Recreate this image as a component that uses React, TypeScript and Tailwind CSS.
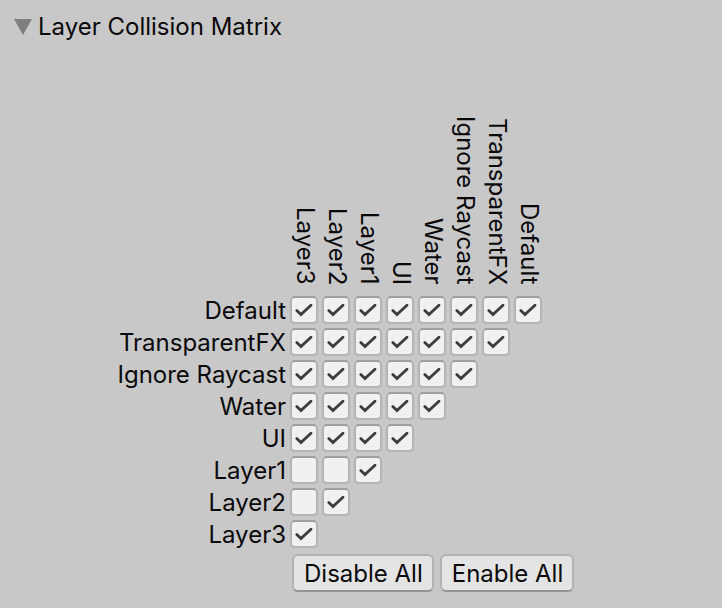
import { useState } from "react";

const LAYERS = ["Default", "TransparentFX", "Ignore Raycast", "Water", "UI", "Layer1", "Layer2", "Layer3"];
const COLUMNS = [...LAYERS].reverse();
const INITIALLY_OFF = ["Layer1/Layer3", "Layer1/Layer2", "Layer2/Layer3"];

const ALL_PAIRS = LAYERS.flatMap((row, i) =>
  COLUMNS.slice(0, COLUMNS.length - i).map((column) => `${row}/${column}`),
);

type CollisionToggleProps = { label: string; checked: boolean; onChange: () => void };

function CollisionToggle({ label, checked, onChange }: CollisionToggleProps) {
  return (
    <label className="grid size-8 place-items-center">
      <input
        type="checkbox"
        aria-label={label}
        checked={checked}
        onChange={onChange}
        className="peer col-start-1 row-start-1 size-7 appearance-none rounded-[5px] border-2 border-[#b4b4b4] border-t-[#9f9f9f] bg-[#f0f0f0]"
      />
      <svg
        viewBox="0 0 28 28"
        aria-hidden="true"
        className="pointer-events-none invisible col-start-1 row-start-1 size-7 peer-checked:visible"
      >
        <path
          d="M6.8 14.6 L10.9 18.6 L21 9.2"
          fill="none"
          stroke="#3c3c3c"
          strokeWidth="2.8"
          strokeLinecap="round"
          strokeLinejoin="miter"
        />
      </svg>
    </label>
  );
}

function ActionButton({ children, onClick }: { children: string; onClick: () => void }) {
  return (
    <button
      type="button"
      onClick={onClick}
      className="h-[38px] rounded-md border-2 border-[#b2b2b2] border-b-[#949494] bg-[#e4e4e4] pt-0.5 pr-[9px] pl-2.5 leading-8 text-[#090909]"
    >
      {children}
    </button>
  );
}

export default function App() {
  const [open, setOpen] = useState(true);
  const [enabled, setEnabled] = useState(() => new Set(ALL_PAIRS.filter((pair) => !INITIALLY_OFF.includes(pair))));

  const toggle = (pair: string) =>
    setEnabled((previous) => {
      const next = new Set(previous);
      if (!next.delete(pair)) next.add(pair);
      return next;
    });

  return (
    <main className="min-h-screen bg-[#c8c8c8] pt-[11px] pb-4 font-['Inter',sans-serif] text-2xl leading-8 text-[#090909]">
      <h1>
        <button
          type="button"
          aria-expanded={open}
          onClick={() => setOpen(!open)}
          className="flex items-center gap-1 pl-3.5"
        >
          <svg viewBox="0 0 20 16" aria-hidden="true" className={`h-4 w-5 ${open ? "" : "-rotate-90"}`}>
            <path d="M0 0 H18 L9 16 Z" fill="#7f7f7f" />
          </svg>
          Layer Collision Matrix
        </button>
      </h1>
      {open && (
        <section aria-label="Layer Collision Matrix">
          <table className="mt-[71px] border-collapse">
            <thead>
              <tr>
                <td className="w-72 p-0" />
                {COLUMNS.map((column) => (
                  <th key={column} scope="col" className="h-45 w-8 p-0 pb-[9px] align-bottom font-normal">
                    <span className="ml-auto block w-[30px] text-right leading-[30px] whitespace-nowrap [writing-mode:vertical-rl]">
                      {column}
                    </span>
                  </th>
                ))}
              </tr>
            </thead>
            <tbody>
              {LAYERS.map((row, i) => (
                <tr key={row}>
                  <th scope="row" className="w-72 p-0 pt-0.5 pr-0.5 text-right leading-[30px] font-normal">
                    {row}
                  </th>
                  {COLUMNS.slice(0, COLUMNS.length - i).map((column) => {
                    const pair = `${row}/${column}`;
                    return (
                      <td key={column} className="p-0">
                        <CollisionToggle
                          label={`${row} and ${column}`}
                          checked={enabled.has(pair)}
                          onChange={() => toggle(pair)}
                        />
                      </td>
                    );
                  })}
                </tr>
              ))}
            </tbody>
          </table>
          <div className="mt-1 ml-73 flex gap-1.5">
            <ActionButton onClick={() => setEnabled(new Set())}>Disable All</ActionButton>
            <ActionButton onClick={() => setEnabled(new Set(ALL_PAIRS))}>Enable All</ActionButton>
          </div>
        </section>
      )}
    </main>
  );
}
